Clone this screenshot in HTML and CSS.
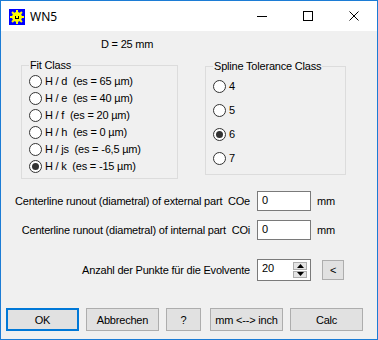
FILE: index.html
```html
<!DOCTYPE html>
<html>
<head>
<meta charset="utf-8">
<link rel="stylesheet" href="styles.css">
</head>
<body>
<div class="window">
  <div class="titlebar">
    <svg class="appicon" width="16" height="16" viewBox="0 0 16 16">
      <rect width="16" height="16" fill="#0000ff"/>
      <g fill="#ffff00">
        <circle cx="8" cy="8" r="5"/>
        <rect x="7" y="1" width="2" height="14"/>
        <rect x="1" y="7" width="14" height="2"/>
        <rect x="7" y="1" width="2" height="14" transform="rotate(45 8 8)"/>
        <rect x="7" y="1" width="2" height="14" transform="rotate(-45 8 8)"/>
      </g>
      <rect x="6" y="7" width="1" height="3" fill="#000"/>
      <rect x="9" y="7" width="1" height="3" fill="#000"/>
      <rect x="7" y="9" width="2" height="1" fill="#000"/>
    </svg>
    <span class="title">WN5</span>
    <div class="caption">
      <div class="capbtn"><svg width="10" height="10" viewBox="0 0 10 10"><rect x="0" y="5" width="10" height="1" fill="#000"/></svg></div>
      <div class="capbtn"><svg width="10" height="10" viewBox="0 0 10 10"><rect x="0.5" y="0.5" width="9" height="9" fill="none" stroke="#000"/></svg></div>
      <div class="capbtn"><svg width="10" height="10" viewBox="0 0 10 10"><path d="M0.5 0.5L9.5 9.5M9.5 0.5L0.5 9.5" stroke="#000" stroke-width="1"/></svg></div>
    </div>
  </div>
  <div class="content">
    <div class="dline">D = 25 mm</div>
    <div class="groups">
      <fieldset class="group fit">
        <legend>Fit Class</legend>
        <div class="radio"><span class="rb"></span><span class="rt">H / d  (es = 65 µm)</span></div>
        <div class="radio"><span class="rb"></span><span class="rt">H / e  (es = 40 µm)</span></div>
        <div class="radio"><span class="rb"></span><span class="rt">H / f  (es = 20 µm)</span></div>
        <div class="radio"><span class="rb"></span><span class="rt">H / h  (es = 0 µm)</span></div>
        <div class="radio"><span class="rb"></span><span class="rt">H / js  (es = -6,5 µm)</span></div>
        <div class="radio"><span class="rb checked"></span><span class="rt">H / k  (es = -15 µm)</span></div>
      </fieldset>
      <fieldset class="group spline">
        <legend>Spline Tolerance Class</legend>
        <div class="radio"><span class="rb"></span><span class="rt">4</span></div>
        <div class="radio"><span class="rb"></span><span class="rt">5</span></div>
        <div class="radio"><span class="rb checked"></span><span class="rt">6</span></div>
        <div class="radio"><span class="rb"></span><span class="rt">7</span></div>
      </fieldset>
    </div>
    <div class="field r1">
      <span class="flabel">Centerline runout (diametral) of external part  COe</span>
      <div class="input">0</div>
      <span class="unit">mm</span>
    </div>
    <div class="field r2">
      <span class="flabel">Centerline runout (diametral) of internal part  COi</span>
      <div class="input">0</div>
      <span class="unit">mm</span>
    </div>
    <div class="field r3">
      <span class="flabel">Anzahl der Punkte für die Evolvente</span>
      <div class="input spin">
        <span class="spinval">20</span>
        <div class="spinbtns">
          <div class="sb"><svg width="7" height="4" viewBox="0 0 7 4"><path d="M3.5 0L7 4H0Z" fill="#000"/></svg></div>
          <div class="sb"><svg width="7" height="4" viewBox="0 0 7 4"><path d="M0 0H7L3.5 4Z" fill="#000"/></svg></div>
        </div>
      </div>
      <div class="smallbtn">&lt;</div>
    </div>
    <div class="buttons">
      <div class="btn ok">OK</div>
      <div class="btn b2">Abbrechen</div>
      <div class="btn q">?</div>
      <div class="btn b4">mm &lt;--&gt; inch</div>
      <div class="btn b5">Calc</div>
    </div>
  </div>
</div>
</body>
</html>
```

FILE: styles.css
```css
* { box-sizing: border-box; }
html, body { margin: 0; padding: 0; }
body {
  font-family: "Liberation Sans", Arial, sans-serif;
  font-size: 11px;
  letter-spacing: -0.2px;
  color: #000;
  background: #fff;
}
.window {
  width: 378px;
  height: 340px;
  border: 1px solid #1c7cd5;
  display: flex;
  flex-direction: column;
  background: #f0f0f0;
}
.titlebar {
  height: 30px;
  background: #fff;
  display: flex;
  align-items: center;
  flex: none;
}
.appicon { margin-left: 8px; margin-top: 1px; flex: none; }
.title {
  margin-left: 5px;
  font-family: "Noto Sans", "Liberation Sans", sans-serif;
  font-size: 12px;
  letter-spacing: 0;
  color: #000;
  margin-top: 1px;
}
.caption { margin-left: auto; display: flex; height: 30px; }
.capbtn {
  width: 46px;
  height: 30px;
  display: flex;
  align-items: center;
  justify-content: center;
}
.capbtn svg { display: block; }
.content {
  flex: 1;
  display: flex;
  flex-direction: column;
}
.dline {
  margin-top: 7px;
  height: 13px;
  line-height: 13px;
  padding-left: 100px;
}
.groups {
  display: flex;
  align-items: flex-start;
  margin-top: 8px;
}
.group {
  margin: 0;
  border: 1px solid #dcdcdc;
  padding: 1px 0 1px 7px;
  min-width: 0;
}
.group legend {
  padding: 0 1px;
  line-height: 13px;
  height: 13px;
}
.fit {
  margin-left: 20px;
  width: 157px;
  height: 120px;
}
.spline {
  margin-left: 27px;
  margin-top: 1px;
  width: 141px;
  height: 115px;
}
.radio {
  display: flex;
  align-items: center;
  height: 17px;
  white-space: pre;
}
.spline .radio { height: 24px; }
.rb {
  width: 13px;
  height: 13px;
  border: 1px solid #333;
  border-radius: 50%;
  background: #fff;
  display: flex;
  align-items: center;
  justify-content: center;
  flex: none;
}
.rb.checked::after {
  content: "";
  width: 7px;
  height: 7px;
  border-radius: 50%;
  background: #333;
}
.rt { margin-left: 3px; line-height: 13px; }
.field {
  display: flex;
  align-items: center;
  height: 20px;
}
.r1 { margin-top: 12px; }
.r2 { margin-top: 9px; }
.r3 { margin-top: 19px; height: 22px; }
.flabel {
  width: 249px;
  text-align: right;
  white-space: pre;
}
.input {
  margin-left: 7px;
  width: 54px;
  height: 100%;
  background: #fff;
  border: 1px solid #7a7a7a;
  padding: 0 0 0 4px;
  line-height: 17px;
}
.unit { margin-left: 6px; }
.spin {
  display: flex;
  align-items: center;
  padding-right: 3px;
}
.spinval { flex: 1; line-height: 17px; align-self: flex-start; }
.spinbtns {
  width: 14px;
  height: 16px;
  display: flex;
  flex-direction: column;
  gap: 1px;
}
.sb {
  flex: 1;
  background: #e4e4e4;
  border: 1px solid #adadad;
  display: flex;
  align-items: center;
  justify-content: center;
}
.sb svg { display: block; }
.smallbtn {
  margin-left: 11px;
  width: 22px;
  height: 20px;
  background: #e1e1e1;
  border: 1px solid #adadad;
  display: flex;
  align-items: center;
  justify-content: center;
}
.buttons {
  display: flex;
  margin-top: 27px;
  height: 23px;
  padding-left: 5px;
}
.btn {
  width: 73px;
  height: 23px;
  background: #e1e1e1;
  border: 1px solid #adadad;
  display: flex;
  align-items: center;
  justify-content: center;
  white-space: pre;
  flex: none;
}
.btn.ok { border: 2px solid #0078d7; }
.b2 { margin-left: 7px; }
.q { margin-left: 7px; width: 35px; }
.b4 { margin-left: 9px; }
.b5 { margin-left: 7px; }
```
